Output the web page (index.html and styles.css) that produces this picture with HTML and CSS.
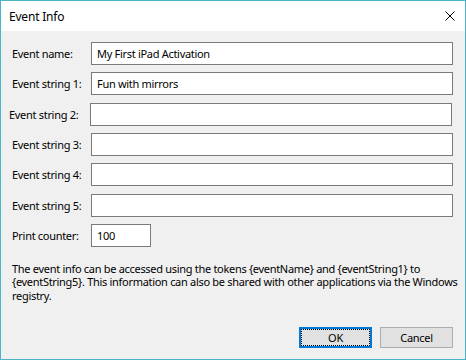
FILE: index.html
```html
<!DOCTYPE html>
<html lang="en">
<head>
  <meta charset="UTF-8" />
  <title>Event Info</title>
  <link rel="stylesheet" href="styles.css">
</head>
<body>
  <div class="window">
    <div class="titlebar">
      <span class="title">Event Info</span>
      <span class="close">
        <svg width="10" height="10" viewBox="0 0 10 10"><path d="M0.5 0.5 L9.5 9.5 M9.5 0.5 L0.5 9.5" stroke="#000" stroke-width="1" fill="none"/></svg>
      </span>
    </div>

    <div class="content">
      <form class="fields">
        <label class="field-label" for="eventName">Event name:</label>
        <input type="text" id="eventName" value="My First iPad Activation" />

        <label class="field-label" for="eventString1">Event string 1:</label>
        <input type="text" id="eventString1" value="Fun with mirrors" />

        <label class="field-label nudged" for="eventString2">Event string 2:</label>
        <input type="text" class="nudged" id="eventString2" />

        <label class="field-label" for="eventString3">Event string 3:</label>
        <input type="text" id="eventString3" />

        <label class="field-label" for="eventString4">Event string 4:</label>
        <input type="text" id="eventString4" />

        <label class="field-label" for="eventString5">Event string 5:</label>
        <input type="text" id="eventString5" />

        <label class="field-label" for="printCounter">Print counter:</label>
        <input type="text" class="short" id="printCounter" value="100" />
      </form>

      <p class="note">The event info can be accessed using the tokens {eventName} and {eventString1} to {eventString5}. This information can also be shared with other applications via the Windows registry.</p>

      <div class="actions">
        <button class="btn btn-default">OK</button>
        <button class="btn">Cancel</button>
      </div>
    </div>
  </div>
</body>
</html>
```

FILE: styles.css
```css
* {
  margin: 0;
  padding: 0;
  box-sizing: border-box;
}

body {
  font-family: 'Noto Sans', 'Open Sans', sans-serif;
  font-size: 11px;
  letter-spacing: -0.3px;
  color: #000;
  background: #f0f0f0;
  width: 466px;
  height: 360px;
  overflow: hidden;
}

.window {
  width: 466px;
  height: 360px;
  border: 1px solid #4ab4c8;
  display: flex;
  flex-direction: column;
  background: #f0f0f0;
}

.titlebar {
  height: 30px;
  background: #fff;
  display: flex;
  align-items: center;
  justify-content: space-between;
  padding: 0 10px 0 8px;
}

.title {
  font-size: 12px;
  letter-spacing: -0.2px;
}

.close {
  display: flex;
  width: 10px;
  height: 10px;
  margin-top: -1px;
}

.content {
  flex: 1;
  display: flex;
  flex-direction: column;
  padding: 11px 12px 11px 11px;
}

.fields {
  display: grid;
  grid-template-columns: 79px 362px;
  row-gap: 7.33px;
  align-items: center;
}

.field-label {
  white-space: nowrap;
}

.field-label.nudged {
  margin-left: -3px;
}

.fields input {
  height: 23px;
  width: 362px;
  border: 1px solid #7a7a7a;
  background: #fff;
  padding: 0 5px;
  font-family: inherit;
  font-size: 11px;
  letter-spacing: -0.3px;
  color: #000;
  outline: none;
}

.fields input.nudged {
  margin-left: -1px;
}

.fields input.short {
  width: 60px;
}

.note {
  margin: 15px -6px 0 0;
  line-height: 13.33px;
}

.actions {
  margin-top: auto;
  display: flex;
  justify-content: flex-end;
  gap: 8px;
}

.btn {
  width: 73px;
  height: 21px;
  border: 1px solid #adadad;
  background: #e1e1e1;
  font-family: inherit;
  font-size: 11px;
  letter-spacing: -0.3px;
  color: #000;
}

.btn-default {
  border: 2px solid #0078d7;
  outline: 1px dotted #000;
  outline-offset: -3px;
}
```
